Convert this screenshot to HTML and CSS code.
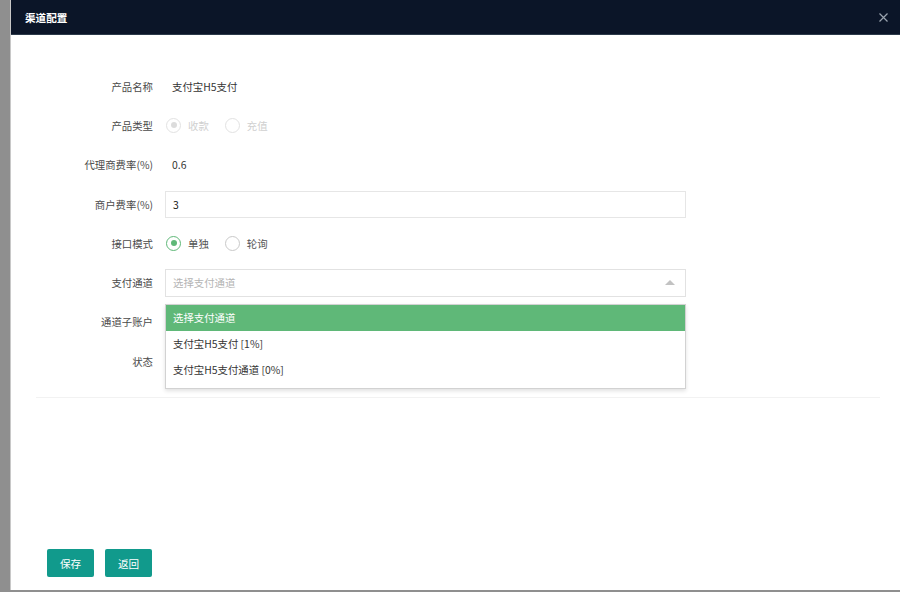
FILE: index.html
```html
<!DOCTYPE html>
<html lang="zh">
<head>
<meta charset="utf-8">
<title>渠道配置</title>
<link rel="stylesheet" href="styles.css">
</head>
<body>
<div class="page">
  <div class="modal">
    <div class="modal-head">
      <span class="modal-title">渠道配置</span>
      <span class="modal-close">
        <svg width="9" height="9" viewBox="0 0 9 9"><path d="M0.5 0.5L8.5 8.5M8.5 0.5L0.5 8.5" stroke="#9aa3ae" stroke-width="1.2"/></svg>
      </span>
    </div>
    <div class="modal-body">
      <div class="form">
        <div class="row">
          <div class="label">产品名称</div>
          <div class="value text">支付宝H5支付</div>
        </div>
        <div class="row">
          <div class="label">产品类型</div>
          <div class="value radios disabled">
            <span class="radio on"><i class="circle"></i>收款</span>
            <span class="radio"><i class="circle"></i>充值</span>
          </div>
        </div>
        <div class="row">
          <div class="label">代理商费率(%)</div>
          <div class="value text">0.6</div>
        </div>
        <div class="row">
          <div class="label">商户费率(%)</div>
          <div class="value"><div class="input">3</div></div>
        </div>
        <div class="row">
          <div class="label">接口模式</div>
          <div class="value radios">
            <span class="radio on"><i class="circle"></i>单独</span>
            <span class="radio"><i class="circle"></i>轮询</span>
          </div>
        </div>
        <div class="row">
          <div class="label">支付通道</div>
          <div class="value select-wrap">
            <div class="input select"><span class="placeholder">选择支付通道</span><i class="caret"></i></div>
            <ul class="dropdown">
              <li class="selected">选择支付通道</li>
              <li>支付宝H5支付 [1%]</li>
              <li>支付宝H5支付通道 [0%]</li>
            </ul>
          </div>
        </div>
        <div class="row">
          <div class="label">通道子账户</div>
          <div class="value"></div>
        </div>
        <div class="row">
          <div class="label">状态</div>
          <div class="value"></div>
        </div>
        <div class="divider"></div>
      </div>
    </div>
    <div class="modal-foot">
      <button class="btn">保存</button>
      <button class="btn">返回</button>
    </div>
  </div>
</div>
</body>
</html>
```
FILE: styles.css
```css
* { box-sizing: border-box; }
html, body { margin: 0; padding: 0; }
body {
  font-family: "Noto Sans CJK SC", "Noto Sans", "Liberation Sans", sans-serif;
  font-size: 10.4px;
  color: #333;
  background: #8f8f8f;
}
.page {
  width: 900px;
  height: 592px;
  display: flex;
  background: #8f8f8f;
  overflow: hidden;
}
.modal {
  margin-left: 10px;
  flex: 1;
  height: 590px;
  background: #fff;
  display: flex;
  flex-direction: column;
  border-left: 1px solid #c8c8c8;
}
.modal-head {
  height: 35px;
  background: #0b1528;
  border-bottom: 1px solid #2c3a4a;
  display: flex;
  align-items: center;
  justify-content: space-between;
  padding: 0 12px 0 14px;
}
.modal-title {
  color: #fff;
  font-size: 10.6px;
  font-weight: 600;
}
.modal-close { display: flex; align-items: center; }
.modal-body { flex: 1; padding-top: 31.5px; }
.form { margin: 0 20px 0 0; }
.row {
  height: 39.3px;
  display: flex;
  align-items: center;
}
.label {
  width: 142px;
  text-align: right;
  color: #4a4a4a;
  flex: none;
}
.value {
  margin-left: 12px;
  width: 521px;
  flex: none;
}
.value.text { padding-left: 7px; color: #333; }
.input {
  height: 27px;
  border: 1px solid #e6e6e6;
  display: flex;
  align-items: center;
  padding-left: 7px;
  color: #111;
  background: #fff;
}
.select { height: 28px; justify-content: space-between; padding-right: 10px; border-color: #e2e2e2; }
.placeholder { color: #b4b4b4; }
.caret {
  width: 0; height: 0;
  border-left: 5px solid transparent;
  border-right: 5px solid transparent;
  border-bottom: 5px solid #c2c2c2;
}
.select-wrap { position: relative; }
.dropdown {
  position: absolute;
  left: 0; right: 0;
  top: 35px;
  margin: 0;
  padding: 0 0 5px;
  list-style: none;
  background: #fff;
  border: 1px solid #d2d2d2;
  box-shadow: 0 2px 4px rgba(0,0,0,.12);
  z-index: 5;
}
.dropdown li {
  height: 26px;
  line-height: 26px;
  padding-left: 7px;
  color: #333;
}
.dropdown li.selected { background: #5fb878; color: #fff; }
.radios { display: flex; align-items: center; padding-left: 1px; }
.radio {
  display: flex;
  align-items: center;
  margin-right: 16px;
  color: #555;
}
.radio .circle {
  width: 15px; height: 15px;
  border-radius: 50%;
  border: 1px solid #c9c9c9;
  margin-right: 7px;
  position: relative;
  display: inline-block;
}
.radio.on .circle { border-color: #5fb878; }
.radio.on .circle::after {
  content: "";
  position: absolute;
  left: 3.5px; top: 3.5px;
  width: 6px; height: 6px;
  border-radius: 50%;
  background: #5fb878;
}
.radios.disabled .radio { color: #d0d0d0; }
.radios.disabled .circle { border-color: #e2e2e2; }
.radios.disabled .radio.on .circle::after { background: #dcdcdc; }
.divider {
  margin: 16px 0 0 25px;
  height: 1px;
  background: #f2f2f2;
}
.modal-foot {
  display: flex;
  gap: 11px;
  padding: 0 0 13px 36px;
}
.btn {
  height: 28px;
  width: 47px;
  border: none;
  border-radius: 2px;
  background: #119a8c;
  color: #fff;
  font-family: inherit;
  font-size: 10.6px;
  padding: 0;
}
```
